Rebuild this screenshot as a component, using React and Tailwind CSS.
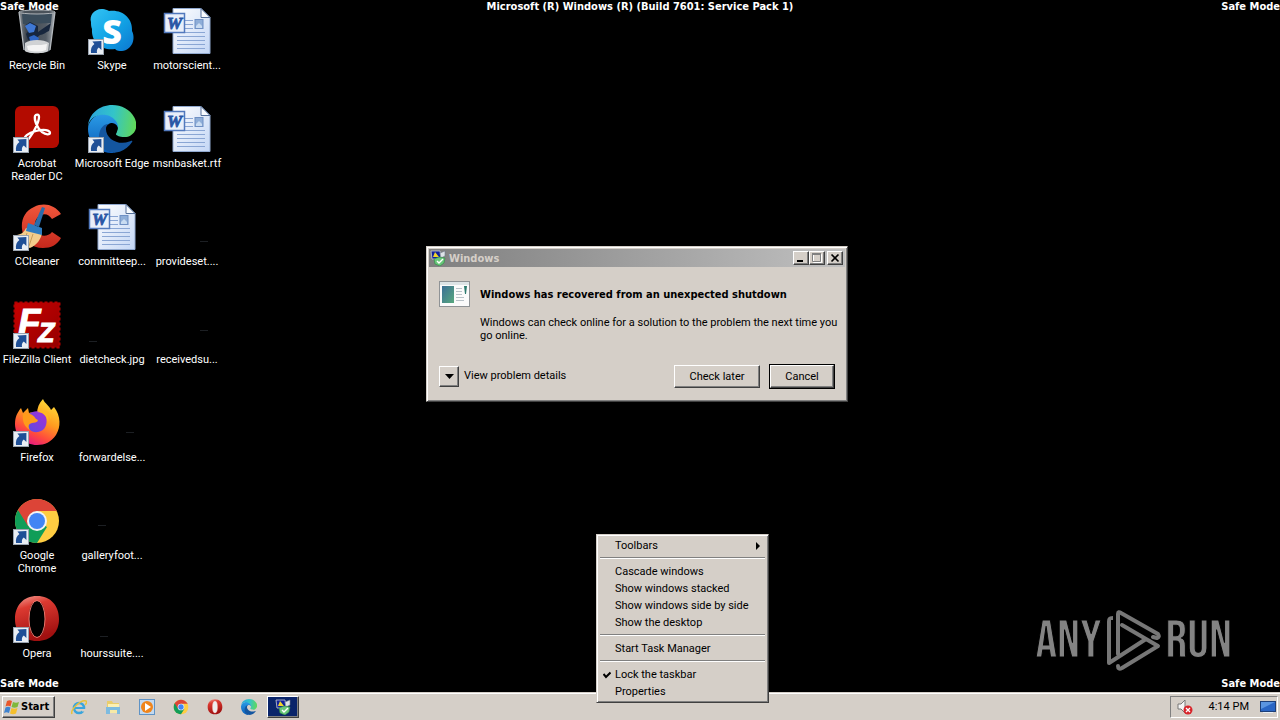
import React from "react";

function Arrow() {
  return (
    <g>
      <rect x="0.5" y="32.5" width="15" height="15" fill="#e9eef4" stroke="#9aa4b0" />
      <path d="M3 46c-.5-4 .5-7 3.400-9l-2-2.500 9-.5v9l-2.600-2.500c-1.700 1-2.200 3-1.800 5.500z" fill="#1f4f96" />
    </g>
  );
}

function RecycleBin() {
  return (
    <svg viewBox="0 0 48 48" className="size-12" aria-hidden="true">
      <defs>
        <linearGradient id="bin" x1="0" x2="1">
          <stop offset="0" stopColor="#8a9096" />
          <stop offset=".2" stopColor="#3d444c" />
          <stop offset=".75" stopColor="#555d66" />
          <stop offset="1" stopColor="#a9aeb3" />
        </linearGradient>
      </defs>
      <path d="M6 5h36l-5 38c-1 4-24 4-26 0z" fill="url(#bin)" />
      <path d="M9 7h30l-1 9-28 1z" fill="#3a4c5b" />
      <path d="M36 24c-3 1-6 4-9 4-4 4-8 5-12 5l-2-6 4-5-4-4 4-3 8 4 0 6 13-9z" fill="#17263d" />
      <path d="M12 19l5-3 6 3-2 6-5 1z" fill="#3f78d4" />
      <path d="M16 30l5-2 5 3-2 5-6 1z" fill="#2f66c4" />
      <path d="M12 36c5-4 19-4 24 0l-1 8c-3 3-20 3-23 0z" fill="#d0d2d4" />
      <path d="M14 39c5-2 12 0 20-2l-1 6c-6 2-13 2-18 0z" fill="#f4f4f4" />
      <path d="M6 5l5 38M42 5l-5 38" stroke="#b4b9be" strokeWidth="1.300" fill="none" />
      <ellipse cx="24" cy="5" rx="18" ry="2" fill="#4a525a" stroke="#aeb3b8" />
    </svg>
  );
}

function Skype() {
  return (
    <svg viewBox="0 0 48 48" className="size-12 overflow-visible" aria-hidden="true">
      <defs>
        <linearGradient id="sky" x1="0" y1="0" x2="1" y2="1">
          <stop offset="0" stopColor="#35c3f3" />
          <stop offset=".5" stopColor="#12a5e6" />
          <stop offset="1" stopColor="#0c76cf" />
        </linearGradient>
      </defs>
      <path d="M3 15C1 8 7 1 15 2c2 0 4 1 6 2 13-2 24 7 23 20 4 8 0 19-10 20-3 0-5 0-7-2C14 44 3 35 4 22c-1-2-1-5-1-7z" fill="url(#sky)" />
      <text x="24" y="37" textAnchor="middle" fontFamily="'Open Sans', sans-serif" fontWeight="800" fontSize="34" fill="#fff">S</text>
      <Arrow />
    </svg>
  );
}

function Word() {
  return (
    <svg viewBox="0 0 48 48" className="size-12" aria-hidden="true">
      <defs>
        <linearGradient id="doc" x1="0" y1="0" x2="1" y2="1">
          <stop offset="0" stopColor="#fff" />
          <stop offset="1" stopColor="#c3d6f5" />
        </linearGradient>
      </defs>
      <path d="M10 1.500h28l9 9v36H10z" fill="url(#doc)" stroke="#91a9cf" />
      <path d="M38 1.500v9h9z" fill="#f8fbff" stroke="#56719b" />
      <path d="M22 13.500h8M22 17.500h8M22 21.500h8M14 25.500h28M14 29.500h28M14 33.500h28M14 37.500h28M14 41.500h28" stroke="#8aa6d4" />
      <rect x="32" y="12.500" width="8" height="9" fill="#8faed8" stroke="#6f90c4" />
      <path d="M33 19l3-3 3 3v2h-6z" fill="#c9dcf2" />
      <rect x="1.500" y="6.500" width="20" height="19" fill="#e9effa" stroke="#5279bd" strokeWidth="1.500" />
      <text x="11.500" y="22" textAnchor="middle" fontFamily="'Liberation Serif', serif" fontStyle="italic" fontWeight="700" fontSize="17" fill="#2a56a5" stroke="#2a56a5" strokeWidth=".8">W</text>
    </svg>
  );
}

function Acrobat() {
  return (
    <svg viewBox="0 0 48 48" className="size-12" aria-hidden="true">
      <rect x="2" y="1" width="44" height="42" rx="6" fill="#b30b00" />
      <path d="M12 35c-2-3 3-7 11-9 8-2 14-1 14 2 0 2-4 2-8-1-5-4-8-12-7-16 1-2 4-2 4 1 0 5-5 15-9 20-2 3-4 4-5 3z" fill="none" stroke="#fff" strokeWidth="2.300" strokeLinejoin="round" />
      <Arrow />
    </svg>
  );
}

function EdgeShapes({ id }) {
  return (
    <g>
      <defs>
        <linearGradient id={id + "t"} x1="0" y1=".5" x2="1" y2=".6">
          <stop offset="0" stopColor="#2ba5dd" />
          <stop offset=".5" stopColor="#33c4c9" />
          <stop offset="1" stopColor="#62d957" />
        </linearGradient>
        <linearGradient id={id + "m"} x1="0" y1="0" x2="0" y2="1">
          <stop offset="0" stopColor="#2a9be6" />
          <stop offset="1" stopColor="#0a5cb8" />
        </linearGradient>
      </defs>
      <path fill={"url(#" + id + "m)"} d="M105.700 241.400c-8.900-5.500-16.600-12.800-22.700-21.300-26.300-36-18.400-86.500 17.600-112.800 3.800-2.700 7.700-5.200 11.900-7.200 3.100-1.500 8.400-4.100 15.500-4 10.100.1 19.600 4.900 25.700 13 4 5.400 6.300 11.900 6.400 18.700 0-.2 24.500-79.600-80-79.600-43.900 0-80 41.700-80 78.200-.2 19.300 4 38.500 12.100 56 27.600 58.800 94.800 87.600 156.400 67.100-21.100 6.600-44.100 3.700-62.900-8.100z" />
      <path fill="#1456a0" d="M230.600 190.500c-3.400 1.800-6.900 3.400-10.500 4.700-11.500 4.300-23.600 6.500-35.900 6.500-47.300 0-88.500-32.500-88.500-74.300.1-11.400 6.400-21.900 16.400-27.300-42.800 1.800-53.800 46.400-53.800 72.500 0 73.900 68.100 81.400 82.800 81.400 7.900 0 19.800-2.300 27-4.600l1.300-.4c27.600-9.500 51-28.100 66.600-52.800 1.100-1.900.5-4.300-1.400-5.400-1.200-.7-2.700-.8-4-.3z" />
      <path fill={"url(#" + id + "t)"} d="M152.300 148.900c-.9 1-3.400 2.500-3.400 5.600 0 2.600 1.700 5.100 4.800 7.300 14.800 10.200 42.500 8.900 42.600 8.900 10.900 0 21.600-3 30.900-8.600 18.900-11.100 30.600-31.300 30.600-53.200.3-22.600-8-37.600-11.400-44.100C225.100 23.300 177.900 0 129.300 0 61.500 0 1.100 47.700.1 118.400c.5-36.500 36.800-66 79.900-66 3.500 0 23.500.3 42 10 16.400 8.700 24.900 19.200 30.900 29.500 6.200 10.700 7.300 24.200 7.300 29.500s-2.800 13.400-7.900 27.500z" />
    </g>
  );
}

function Edge() {
  return (
    <svg viewBox="0 0 48 48" className="size-12" aria-hidden="true">
      <g transform="scale(.1875)"><EdgeShapes id="e1" /></g>
      <Arrow />
    </svg>
  );
}

function CCleaner() {
  return (
    <svg viewBox="0 0 48 48" className="size-12" aria-hidden="true">
      <defs>
        <linearGradient id="cc" x1="0" y1="0" x2="0" y2="1">
          <stop offset="0" stopColor="#f0573c" />
          <stop offset="1" stopColor="#c5281c" />
        </linearGradient>
      </defs>
      <path d="M48 11C42 2 31-1 21 4 12 8 8 16 9 26c1 12 10 19 21 19 8 0 14-3 18-10l-9-6c-4 5-12 5-15 0-4-7-2-14 4-17 5-2 8 0 11 4z" fill="url(#cc)" />
      <path d="M13 25l16 5c-1 6-5 12-12 15L2 40c-2-3-1-7 2-8 5-1 7-3 9-7z" fill="#f3cd8c" />
      <path d="M8 33l-3 7M14 30l-4 12M20 31l-4 12" stroke="#c99c58" fill="none" />
      <path d="M15 20l14 5v7l-16-4z" fill="#2f7cc0" />
      <path d="M29 4l3 1-6 19-5-2z" fill="#2a6cab" />
      <Arrow />
    </svg>
  );
}

function FileZilla() {
  return (
    <svg viewBox="0 0 48 48" className="size-12" aria-hidden="true">
      <defs>
        <linearGradient id="fz" x1="0" y1="0" x2="1" y2="1">
          <stop offset="0" stopColor="#c80000" />
          <stop offset="1" stopColor="#940000" />
        </linearGradient>
      </defs>
      <rect x="1.500" y="1.500" width="45" height="45" fill="url(#fz)" stroke="#b30000" strokeWidth="2" strokeDasharray="3 2" />
      <text x="5" y="34" fontFamily="'Liberation Sans', sans-serif" fontStyle="italic" fontWeight="700" fontSize="37" fill="#fff" stroke="#fff">F</text>
      <text x="25" y="41" fontFamily="'Liberation Sans', sans-serif" fontStyle="italic" fontWeight="700" fontSize="27" fill="#fff" stroke="#fff">Z</text>
      <Arrow />
    </svg>
  );
}

function Firefox() {
  return (
    <svg viewBox="0 0 48 48" className="size-12" aria-hidden="true">
      <defs>
        <linearGradient id="ff" x1=".8" y1="0" x2=".3" y2="1">
          <stop offset="0" stopColor="#ffe23a" />
          <stop offset=".45" stopColor="#ff9a1f" />
          <stop offset=".75" stopColor="#ff4a3d" />
          <stop offset="1" stopColor="#e31587" />
        </linearGradient>
        <linearGradient id="fg" x1="1" y1="0" x2="0" y2="1">
          <stop offset="0" stopColor="#a52fd6" />
          <stop offset="1" stopColor="#5a4be0" />
        </linearGradient>
      </defs>
      <path d="M30 0c2 5 6 6 8 11l3-3c7 9 7 20 2 28-5 7-11 10-19 10C12 46 2 37 2 25c0-7 2-11 6-16l2 5 5-5 1 5c3-1 6 0 8 1 0-6 2-11 6-15z" fill="url(#ff)" />
      <path d="M16 15c6-5 14-3 17 3 2 7-1 14-8 15-6 1-11-3-11-9l9-3c-2-3-4-4-7-6z" fill="url(#fg)" />
      <path d="M10 15c5-2 10 0 13 5 4 1 1 4-4 4-4 1-4 4-2 7-6-3-8-10-7-16z" fill="#ff9b1a" />
      <path d="M24 13c6 0 10 4 11 10 1-3 0-6-1-8 2 1 3 3 4 6 1-7-5-13-14-8z" fill="#ffb824" />
      <Arrow />
    </svg>
  );
}

function ChromeShapes() {
  return (
    <g>
      <circle cx="24" cy="24" r="22" fill="#ffcd42" />
      <path d="M24 24L4.950 13A22 22 0 0 0 24 46l10-16z" fill="#109d58" />
      <path d="M4.950 13A22 22 0 0 1 43.050 13L44 14H24l-9 15z" fill="#dc4437" />
      <circle cx="24" cy="24" r="10" fill="#f3f3f3" />
      <circle cx="24" cy="24" r="8" fill="#4285f4" />
    </g>
  );
}

function Chrome() {
  return (
    <svg viewBox="0 0 48 48" className="size-12" aria-hidden="true">
      <ChromeShapes />
      <Arrow />
    </svg>
  );
}

function OperaShapes({ id }) {
  return (
    <g>
      <defs>
        <linearGradient id={id} x1="0" y1="0" x2=".3" y2="1">
          <stop offset="0" stopColor="#f5a79c" />
          <stop offset=".3" stopColor="#dc3a31" />
          <stop offset="1" stopColor="#a01010" />
        </linearGradient>
      </defs>
      <path fillRule="evenodd" d="M24 1C10 1 2 11 2 24s8 22 22 22 22-9 22-22S38 1 24 1zm0 5c6 0 8 8 8 18s-2 18-8 18-8-8-8-18 2-18 8-18z" fill={"url(#" + id + ")"} />
      <ellipse cx="24" cy="24" rx="8" ry="18.500" fill="none" stroke="#e9756b" strokeWidth="1" />
    </g>
  );
}

function Opera() {
  return (
    <svg viewBox="0 0 48 48" className="size-12" aria-hidden="true">
      <OperaShapes id="op1" />
      <Arrow />
    </svg>
  );
}

function Faint({ x, y }) {
  return (
    <svg viewBox="0 0 48 48" className="size-12" aria-hidden="true">
      <rect x={x} y={y} width="8" height="1" fill="#1c1f23" />
    </svg>
  );
}

const shortcuts = [
  ["Recycle Bin", <RecycleBin />],
  ["Acrobat\nReader DC", <Acrobat />],
  ["CCleaner", <CCleaner />],
  ["FileZilla Client", <FileZilla />],
  ["Firefox", <Firefox />],
  ["Google\nChrome", <Chrome />],
  ["Opera", <Opera />],
  ["Skype", <Skype />],
  ["Microsoft Edge", <Edge />],
  ["committeep...", <Word />],
  ["dietcheck.jpg", <Faint x="1" y="40" />],
  ["forwardelse...", <Faint x="38" y="33" />],
  ["galleryfoot...", <Faint x="10" y="28" />],
  ["hourssuite....", <Faint x="12" y="41" />],
  ["motorscient...", <Word />],
  ["msnbasket.rtf", <Word />],
  ["provideset....", <Faint x="37" y="38" />],
  ["receivedsu...", <Faint x="37" y="29" />],
];

function ComputerCheck() {
  return (
    <svg viewBox="0 0 16 16" className="size-4 shrink-0" aria-hidden="true">
      <path d="M1 1h9l1 8H2z" fill="#10209c" stroke="#c9cdd3" strokeWidth=".8" />
      <path d="M5 2l4 5H3z" fill="#f1d52c" />
      <path d="M10 3l5-2v5l-4 2z" fill="#dfe4e8" stroke="#6e7b8b" strokeWidth=".6" />
      <path d="M4 9l5-2 6 1-1 5-4 3-5-2z" fill="#69c77a" stroke="#2f8a44" strokeWidth=".6" />
      <path d="M7 11l2 2 4-4" stroke="#fff" strokeWidth="1.400" fill="none" />
    </svg>
  );
}

const raised = "bg-[#d5cfc8] border border-t-white border-l-white border-r-[#404040] border-b-[#404040] shadow-[inset_-1px_-1px_0_#808080]";

function Dialog() {
  return (
    <section role="dialog" aria-labelledby="dialog-title" className="absolute left-[426px] top-[246px] w-[422px] bg-[#d5cfc8] border border-t-[#d5cfc8] border-l-[#d5cfc8] border-r-[#404040] border-b-[#404040] shadow-[inset_1px_1px_0_#fff,inset_-1px_-1px_0_#808080] p-[2px]">
      <header className="flex h-[18px] items-center gap-[2px] bg-gradient-to-r from-[#808080] to-[#c0c0c0] px-px">
        <ComputerCheck />
        <h1 id="dialog-title" className="flex-1 pl-px font-['DejaVu_Sans_Condensed','DejaVu_Sans',sans-serif] font-bold text-[#d5cfc8]">Windows</h1>
        <div className="flex pr-px">
          <button aria-label="Minimize" className={"flex h-[14px] w-4 items-center justify-center " + raised}>
            <svg viewBox="0 0 14 12" className="w-[14px]" aria-hidden="true"><path d="M3 8h6v2H3z" /></svg>
          </button>
          <button aria-label="Maximize" disabled className={"flex h-[14px] w-4 items-center justify-center " + raised}>
            <svg viewBox="0 0 14 12" className="w-[14px]" aria-hidden="true"><path d="M3.500 2.500h8v8h-8z" fill="none" stroke="#fff" /><path d="M2.500 1.500h8v8h-8z" fill="none" stroke="#808080" /><path d="M2 1h9v2H2z" fill="#808080" /></svg>
          </button>
          <button aria-label="Close" className={"ml-[2px] flex h-[14px] w-4 items-center justify-center " + raised}>
            <svg viewBox="0 0 14 12" className="w-[14px]" aria-hidden="true"><path d="M3.500 2.500l7 7M10.500 2.500l-7 7" stroke="#000" strokeWidth="1.700" /></svg>
          </button>
        </div>
      </header>
      <div className="flex gap-[10px] px-[10px] pt-[14px]">
        <svg viewBox="0 0 31 26" className="h-[26px] w-[31px] shrink-0" aria-hidden="true">
          <rect x=".5" y=".5" width="30" height="25" fill="#fbfbfb" stroke="#8f9396" />
          <path d="M1 1h29v3H1z" fill="#dde4e6" />
          <defs>
            <linearGradient id="win" x1="0" y1="0" x2="1" y2="1">
              <stop offset="0" stopColor="#3c6f96" />
              <stop offset="1" stopColor="#58a87e" />
            </linearGradient>
          </defs>
          <rect x="3" y="5" width="12" height="17" fill="url(#win)" />
          <path d="M17 7.500h6M17 10.500h6M17 13.500h6M17 16.500h8M17 19.500h8" stroke="#b9c2c8" />
          <path d="M25 5h3l-1 8h-1z" fill="#2c7a6e" />
        </svg>
        <div className="whitespace-nowrap">
          <h2 className="mt-[7px] font-['DejaVu_Sans_Condensed','DejaVu_Sans',sans-serif] font-bold">Windows has recovered from an unexpected shutdown</h2>
          <p className="mt-[15px]">Windows can check online for a solution to the problem the next time you<br />go online.</p>
        </div>
      </div>
      <footer className="flex items-center px-[10px] pb-[10px] pt-[22px]">
        <button id="details" aria-label="View problem details" className={"flex h-[21px] w-[20px] items-center justify-center " + raised}>
          <svg viewBox="0 0 9 5" className="h-[5px] w-[9px]" aria-hidden="true"><path d="M0 0h9L4.500 5z" /></svg>
        </button>
        <label htmlFor="details" className="flex-1 pb-[2px] pl-[5px]">View problem details</label>
        <button className={"h-[23px] w-[86px] " + raised}>Check later</button>
        <span className="ml-[9px] border border-black">
          <button className={"block h-[23px] w-16 " + raised}>Cancel</button>
        </span>
      </footer>
    </section>
  );
}

const menu = [
  ["Toolbars"],
  ["Cascade windows", "Show windows stacked", "Show windows side by side", "Show the desktop"],
  ["Start Task Manager"],
  ["Lock the taskbar", "Properties"],
];

function TaskbarMenu() {
  return (
    <div role="menu" className="absolute bottom-[17px] left-[596px] z-10 w-[173px] border border-l-[#d5cfc8] border-t-[#d5cfc8] border-b-[#404040] border-r-[#404040] bg-[#d5cfc8] p-[2px] shadow-[inset_1px_1px_0_#fff,inset_-1px_-1px_0_#808080]">
      {menu.map((group, i) => (
        <div key={i}>
          {i > 0 && <div role="separator" className="mx-px mb-[4px] mt-[3px] h-[2px] border-t border-b border-t-[#808080] border-b-white" />}
          {group.map((item) => (
            <button key={item} role="menuitem" className="flex h-[17px] w-full items-center pr-[6px] text-left">
              <span className="flex w-4 shrink-0 justify-center">
                {item === "Lock the taskbar" && (
                  <svg viewBox="0 0 8 8" className="mt-px size-2" aria-hidden="true"><path d="M.5 3l2.500 3L7.500 1.500" fill="none" stroke="#000" strokeWidth="2" /></svg>
                )}
              </span>
              <span className="flex-1">{item}</span>
              {item === "Toolbars" && (
                <svg viewBox="0 0 4 8" className="h-2 w-1" aria-hidden="true"><path d="M0 0l4 4-4 4z" /></svg>
              )}
            </button>
          ))}
        </div>
      ))}
    </div>
  );
}

function Watermark() {
  return (
    <div className="absolute bottom-[20px] right-[48px] flex items-center font-['Bebas_Neue','Roboto_Condensed',sans-serif] text-[54px] leading-[62px] text-[#838383]">
      <span className="[-webkit-text-stroke:1px_black]">ANY</span>
      <svg viewBox="0 0 56 62" className="mx-[4px] h-[62px] w-[56px] fill-none stroke-[#777]" strokeWidth="4" strokeLinecap="round" strokeLinejoin="round" aria-hidden="true">
        <path d="M8 8C4 8 4 9 4 12v41l37-24" strokeLinecap="butt" />
        <path d="M13 44V4q0-3 3-1l37 21q2 3-1 4l-4-1" />
        <path d="M17 15l36 21-36 22q-4 2-4-2" />
      </svg>
      <span className="[-webkit-text-stroke:1px_black]">RUN</span>
    </div>
  );
}

const quick = [
  ["Internet Explorer", <g><circle cx="8" cy="9" r="5" fill="none" stroke="#3aa5dc" strokeWidth="2.600" /><path d="M4 9h9" stroke="#3aa5dc" strokeWidth="2" /><path d="M11 10h5v2.500h-5z" fill="#d5cfc8" /><path d="M1 15C-1 11 10 0 15 2c1 1 0 3-1 4" fill="none" stroke="#e8c23a" strokeWidth="1.500" /></g>],
  ["Windows Explorer", <g><path d="M2 2h5l1 2h6v10H2z" fill="#e9cd6c" /><path d="M3 5h11v4H3z" fill="#fbf0b4" /><path d="M1 8h14v7h-3v-4H5v4H1z" fill="#7dbbe0" /><path d="M5 11h7v3H5z" fill="#f6e9a6" /></g>],
  ["Media Player", <g><rect x=".5" y=".5" width="15" height="15" fill="#c3d9ef" stroke="#5f93c5" /><circle cx="8" cy="8" r="6" fill="#f0851b" /><path d="M6 4l6 4-6 4z" fill="#fff" /></g>],
  ["Chrome", <g transform="scale(.3333)"><ChromeShapes /></g>],
  ["Opera", <g transform="scale(.3333)"><ellipse cx="24" cy="24" rx="10" ry="19" fill="#eee" /><OperaShapes id="op2" /></g>],
  ["Edge", <g transform="scale(.0625)"><EdgeShapes id="e2" /></g>],
];

function Taskbar() {
  return (
    <footer className="border-t border-[#d5cfc8] bg-[#d5cfc8]">
      <div className="flex h-[27px] items-center border-t border-white px-[2px] pb-px">
        <button className={"flex h-[22px] w-[53px] items-center gap-px pl-px font-['DejaVu_Sans_Condensed','DejaVu_Sans',sans-serif] font-bold " + raised}>
          <svg viewBox="0 0 16 16" className="size-4 shrink-0" aria-hidden="true">
            <path d="M3 2c2-1 3-1 5 0L6.500 7.500c-2-1-3-1-5 0z" fill="#e8572a" />
            <path d="M9 3c2 1 4 1 6 0l-1.500 5c-2 1-4 1-6 0z" fill="#7fb83a" />
            <path d="M1.500 8.500c2-1 3-1 5 0L5 14c-2-1-3-1-5 0z" fill="#3f83cf" />
            <path d="M7.500 9c2 1 4 1 6 0L12 14.500c-2 1-4 1-6 0z" fill="#f4bf2c" />
          </svg>
          Start
        </button>
        <nav aria-label="Quick launch" className="ml-4 flex gap-[18px]">
          {quick.map(([name, art]) => (
            <button key={name} aria-label={name}>
              <svg viewBox="0 0 16 16" className="size-4" aria-hidden="true">{art}</svg>
            </button>
          ))}
        </nav>
        <button aria-label="Windows" className="ml-[10px] flex h-[22px] w-8 items-center justify-center border border-white border-b-[#404040] border-r-[#404040] bg-[#0a246a] shadow-[inset_-1px_-1px_0_#808080]">
          <ComputerCheck />
        </button>
        <div className="ml-auto flex h-[22px] items-center border border-b-white border-l-[#808080] border-r-white border-t-[#808080] pl-[6px] pr-px">
          <svg viewBox="0 0 16 16" className="size-4" aria-hidden="true">
            <path d="M1 5h3l4-4v13l-4-4H1z" fill="#f5f5f5" stroke="#6d6d6d" strokeWidth=".9" />
            <circle cx="11" cy="11" r="4.500" fill="#d8242a" />
            <path d="M9 9l4 4M13 9l-4 4" stroke="#fff" strokeWidth="1.300" />
          </svg>
          <time className="pl-4 pr-[11px]">4:14 PM</time>
          <svg viewBox="0 0 16 16" className="size-4" aria-hidden="true">
            <rect x=".5" y="2.500" width="15" height="10" fill="#2a66c4" stroke="#1d3f78" />
            <path d="M1 3h14L1 10z" fill="#5b95e0" />
            <path d="M3 13h10v1H3z" fill="#e8eef5" />
          </svg>
        </div>
      </div>
    </footer>
  );
}

export default function App() {
  return (
    <div className="relative flex min-h-screen flex-col overflow-hidden bg-black font-[Roboto,'Liberation_Sans',sans-serif] text-[11px] leading-[13px] text-black">
      <main className="relative flex-1 text-white">
        <div className="absolute inset-x-0 top-0 grid grid-cols-3 font-['DejaVu_Sans_Condensed','DejaVu_Sans',sans-serif] font-bold">
          <span>Safe Mode</span>
          <span className="whitespace-nowrap text-center">Microsoft (R) Windows (R) (Build 7601: Service Pack 1)</span>
          <span className="text-right">Safe Mode</span>
        </div>
        <div className="grid w-fit grid-flow-col grid-cols-[74px_74px_74px] grid-rows-[repeat(6,98px)_auto] gap-x-px pt-[7px]">
          {shortcuts.map(([name, art]) => (
            <button key={name} className="flex flex-col items-center gap-[4px] self-start text-center">
              {art}
              <span className="whitespace-pre">{name}</span>
            </button>
          ))}
        </div>
        <div className="absolute inset-x-0 bottom-[2px] flex justify-between font-['DejaVu_Sans_Condensed','DejaVu_Sans',sans-serif] font-bold">
          <span>Safe Mode</span>
          <span>Safe Mode</span>
        </div>
        <Watermark />
        <div className="text-black"><Dialog /></div>
      </main>
      <Taskbar />
      <TaskbarMenu />
    </div>
  );
}
